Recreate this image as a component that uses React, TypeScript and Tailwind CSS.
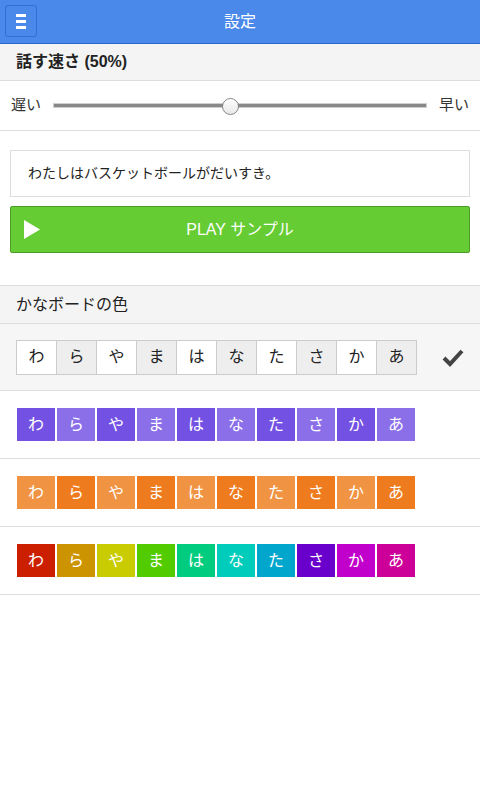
const kana = ["わ", "ら", "や", "ま", "は", "な", "た", "さ", "か", "あ"];

const purple = ["#7352e3", "#8a6fe8"];
const orange = ["#f09342", "#ee7c1f"];
const rainbow = [
  "#cc1f00",
  "#cc9400",
  "#c9cc00",
  "#52cc00",
  "#00cc80",
  "#00ccbb",
  "#00a6cc",
  "#6a00cc",
  "#c200cc",
  "#cc0099",
];

function ColorRow({ colors }: { colors: string[] }) {
  return (
    <div className="flex h-[68px] items-center border-b border-[#dddddd] pl-[17px]">
      <div className="flex gap-[2px]">
        {kana.map((k, i) => (
          <div
            key={k}
            className="flex h-[33px] w-[38px] items-center justify-center text-[16px] text-white"
            style={{ backgroundColor: colors[i % colors.length] }}
          >
            {k}
          </div>
        ))}
      </div>
    </div>
  );
}

export default function App() {
  return (
    <div
      className="flex h-screen w-full flex-col bg-white text-[#333333]"
      style={{ fontFamily: '"Liberation Sans", "Noto Sans CJK JP", sans-serif' }}
    >
      {/* Header */}
      <div className="relative flex h-[44px] items-center justify-center border-b border-[#2a66c8] bg-[#4a89ea]">
        <button className="absolute left-[5px] top-[5px] flex h-[32px] w-[32px] flex-col items-center justify-center gap-[3px] rounded-[3px] border border-[#2f6fd6]">
          <span className="h-[3px] w-[10px] bg-white" />
          <span className="h-[3px] w-[10px] bg-white" />
          <span className="h-[3px] w-[10px] bg-white" />
        </button>
        <span className="text-[16px] text-white">設定</span>
      </div>

      {/* Speed */}
      <div className="flex h-[37px] items-center border-b border-[#dddddd] bg-[#f4f4f4] px-[16px]">
        <span className="text-[16px] font-bold text-[#222222]">話す速さ (50%)</span>
      </div>
      <div className="flex h-[50px] items-center border-b border-[#dddddd] px-[11px] text-[15px]">
        <span>遅い</span>
        <div className="relative mx-[12px] flex h-[16px] flex-1 items-center">
          <div className="h-[5px] w-full border border-[#cfcfcf] bg-[#888888]" />
          <div className="absolute left-[169px] top-0 h-[17px] w-[17px] rounded-full border border-[#888888] bg-gradient-to-b from-white to-[#e8e8e8]" />
        </div>
        <span>早い</span>
      </div>

      {/* Sample */}
      <div className="px-[10px] pt-[19px] pb-[32px]">
        <div className="flex h-[47px] items-center border border-[#dddddd] px-[17px] text-[14px] text-[#222222]">
          わたしはバスケットボールがだいすき。
        </div>
        <button className="relative mt-[9px] flex h-[47px] w-full items-center justify-center rounded-[2px] border border-[#4c9a2a] bg-[#66cc33] text-[16px] text-white">
          <svg className="absolute left-[13px] top-[13px]" width="16" height="19" viewBox="0 0 16 19">
            <path d="M0 0 L16 9.5 L0 19 Z" fill="white" />
          </svg>
          PLAY サンプル
        </button>
      </div>

      {/* Kana board colours */}
      <div className="flex h-[39px] items-center border-y border-[#dddddd] bg-[#f4f4f4] px-[16px]">
        <span className="text-[16px] text-[#222222]">かなボードの色</span>
      </div>
      <div className="flex h-[67px] items-center justify-between border-b border-[#dddddd] bg-[#f6f6f6] pl-[16px] pr-[16px]">
        <div className="flex">
          {kana.map((k, i) => (
            <div
              key={k}
              className={
                "-ml-px flex h-[35px] w-[41px] items-center justify-center border border-[#cccccc] text-[16px] text-[#222222] first:ml-0 " +
                (i % 2 === 0 ? "bg-white" : "bg-[#eeeeee]")
              }
            >
              {k}
            </div>
          ))}
        </div>
        <svg width="22" height="20" viewBox="0 0 22 20">
          <path d="M2 11 L8 17 L20 4" fill="none" stroke="#444444" strokeWidth="4" />
        </svg>
      </div>
      <ColorRow colors={purple} />
      <ColorRow colors={orange} />
      <ColorRow colors={rainbow} />
    </div>
  );
}
